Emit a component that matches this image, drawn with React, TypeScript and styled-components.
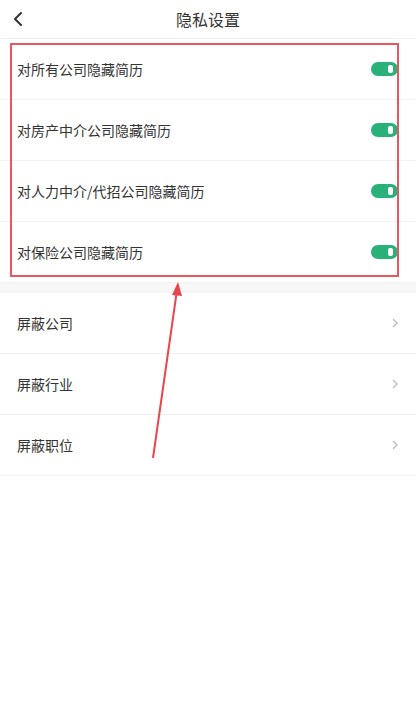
import styled, { createGlobalStyle } from 'styled-components';
import { FC } from 'react';

const GlobalStyle = createGlobalStyle`
body{
    margin: 0;
    background: #fff;
    font-family: "Noto Sans CJK SC", "Noto Sans", sans-serif;
    color: #333;
}
`;

const Page = styled.div`
position: relative;
width: 416px;
min-height: 720px;
background: #fff;
overflow: hidden;
`;

const Header = styled.div`
display: grid;
grid-template-columns: 40px 1fr 40px;
align-items: center;
height: 38px;
border-bottom: 1px solid #f1f1f1;
.title{
    text-align: center;
    font-size: 16px;
    color: #333;
}
.back{
    display: flex;
    padding-left: 13px;
}
`;

const Section = styled.div`
display: flex;
flex-direction: column;
`;

const Row = styled.div`
display: flex;
align-items: center;
justify-content: space-between;
height: 60px;
padding: 0 18px 0 17px;
border-bottom: 1px solid #f2f2f2;
font-size: 14px;
color: #333;
&:last-child{
    border-bottom: 1px solid #f2f2f2;
}
`;

const Gap = styled.div`
height: 10px;
background: #f7f7f7;
`;

const Toggle = styled.div<{ $on?: boolean }>`
position: relative;
width: 27px;
height: 14px;
border-radius: 7px;
background: ${p => (p.$on ? '#28b27a' : '#ddd')};
&::after{
    content: '';
    position: absolute;
    top: 3px;
    right: 5px;
    width: 5px;
    height: 8px;
    border-radius: 2px;
    background: #fff;
}
`;

const Chevron = styled.svg`
flex-shrink: 0;
`;

// red annotation frame and arrow drawn over the list
const Frame = styled.div`
position: absolute;
left: 10px;
top: 43px;
width: 385px;
height: 230px;
border: 2px solid #e8575d;
pointer-events: none;
`;

const Arrow = styled.svg`
position: absolute;
left: 140px;
top: 278px;
pointer-events: none;
`;

const switches = [
    '对所有公司隐藏简历',
    '对房产中介公司隐藏简历',
    '对人力中介/代招公司隐藏简历',
    '对保险公司隐藏简历',
];

const blocks = ['屏蔽公司', '屏蔽行业', '屏蔽职位'];

const App: FC = () => {
    return (
        <Page>
            <GlobalStyle />
            <Header>
                <div className='back'>
                    <svg width='12' height='16' viewBox='0 0 12 16'>
                        <polyline points='8,2 2,8 8,14' fill='none' stroke='#333' strokeWidth='2' strokeLinecap='round' strokeLinejoin='round' />
                    </svg>
                </div>
                <div className='title'>隐私设置</div>
                <div />
            </Header>
            <Section>
                {switches.map(label => (
                    <Row key={label}>
                        {label}
                        <Toggle $on />
                    </Row>
                ))}
            </Section>
            <Gap />
            <Section>
                {blocks.map(label => (
                    <Row key={label}>
                        {label}
                        <Chevron width='6' height='10' viewBox='0 0 6 10'>
                            <polyline points='1,1 5,5 1,9' fill='none' stroke='#bbb' strokeWidth='1.3' />
                        </Chevron>
                    </Row>
                ))}
            </Section>
            <Frame />
            <Arrow width='50' height='185' viewBox='0 0 50 185'>
                <line x1='13' y1='180' x2='37' y2='12' stroke='#e8474f' strokeWidth='2' />
                <polygon points='38,4 32,17 42,18' fill='#e8474f' />
            </Arrow>
        </Page>
    );
};

export default App;
